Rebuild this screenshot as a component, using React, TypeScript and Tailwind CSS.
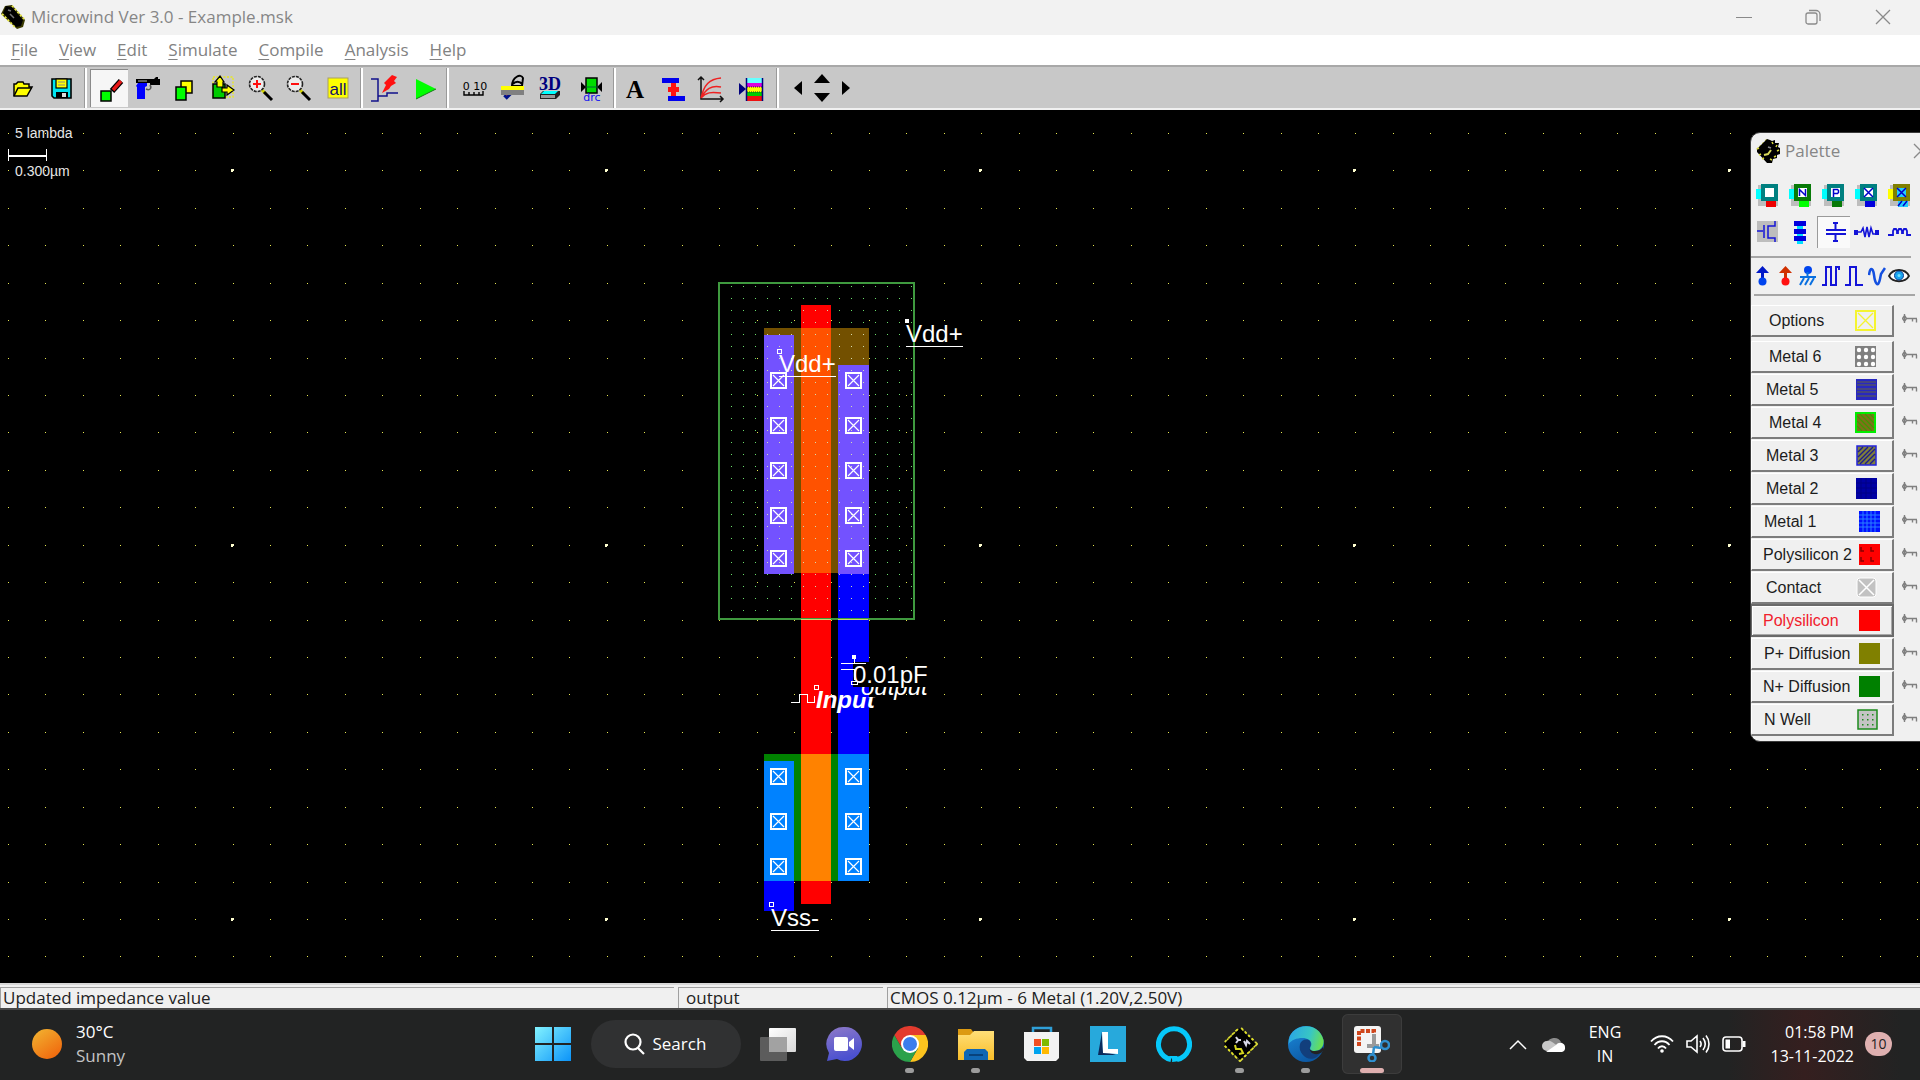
import React from "react";
import type { ReactNode } from "react";

const UI = "font-['Open_Sans','Noto_Sans',sans-serif]";

function Pix({ children }: { children: ReactNode }) {
  return (
    <svg width="38" height="38" viewBox="0 0 38 38" aria-hidden="true" className="block">
      {children}
    </svg>
  );
}

function Tool({ label, active = false, children }: { label: string; active?: boolean; children: ReactNode }) {
  return (
    <button
      type="button"
      aria-label={label}
      className={
        active
          ? "h-[38px] w-[38px] bg-[#f6f6f6] shadow-[inset_1px_1px_0_#8a8a8a]"
          : "h-[38px] w-[38px]"
      }
    >
      <Pix>{children}</Pix>
    </button>
  );
}

function Divider({ className }: { className: string }) {
  return <div className={`h-10 w-[3px] border-l border-r-2 border-l-[#9a9a9a] border-r-white ${className}`} />;
}

function ChipIcon({ className }: { className: string }) {
  return (
    <svg viewBox="0 0 24 24" className={className} aria-hidden="true">
      <path d="M4 1 L11 0 L24 15 L22 22 L16 24 L0 9 Z" fill="#3a3a00" />
      <path d="M11 1l12 13M1 9l14 14" stroke="#e6e64a" strokeWidth="2" strokeDasharray="2 2" />
      <path d="M5 1 L11 2 L22 15 L20 21 L15 22 L2 8 Z" fill="#000" />
      <path d="M7 5l3 1M9 9l4 4" stroke="#777" strokeWidth="1.5" />
    </svg>
  );
}

function PaletteChip() {
  return (
    <svg viewBox="0 0 24 24" className="h-6 w-6" aria-hidden="true">
      <path d="M11 1L2 10L11 22" fill="none" stroke="#c8c83c" strokeWidth="2.500" strokeDasharray="2 2" />
      <path d="M11 0l3 1 2 1 3-1v3h4l-1 4 2 1v6l-3 1v3l-4 1-1 4h-5L1 13v-3z" fill="#000" />
      <path d="M16 3l1 2M21 6l-1 2M23 11l-2 1M20 17l-2 1M16 21l-2-1M5 15l-2 1M8 19l-2 1M3 9l-2 1" stroke="#d8d83c" strokeWidth="1.500" />
      <path d="M8 16l4-1 3-4" fill="none" stroke="#d8d85a" strokeWidth="2" />
      <path d="M12 8l3 1" stroke="#888" strokeWidth="1.500" />
    </svg>
  );
}

function MicrowindLogo() {
  return (
    <svg viewBox="0 0 36 36" className="h-9 w-9 shrink-0" aria-hidden="true">
      <path d="M18 3L33 18L18 33L3 18Z" fill="none" stroke="#d8d83a" strokeWidth="5" strokeDasharray="2.500 2.500" />
      <path d="M18 2L34 18L18 34L2 18Z" fill="#000" />
      <path d="M16 3L3 16M20 3l13 13M3 20l13 13M33 20L20 33" stroke="#e0e020" strokeWidth="1.500" strokeDasharray="2 2.500" />
      <g fill="none" strokeWidth="2">
        <path d="M17 13l-3 4M14 11l2 3 3 0M22 15l2 4 1-4 3 3" stroke="#d8d8e8" />
        <path d="M13 19l1 4h5l2 4-4 1" stroke="#d6d620" />
      </g>
    </svg>
  );
}

function TitleBar() {
  return (
    <header className="flex h-[35px] shrink-0 items-center bg-[#f2f2f2] pb-0.5 pl-px text-[#868686]">
      <ChipIcon className="h-6 w-6" />
      <h1 className="ml-1.5 text-[17px] leading-6">Microwind Ver 3.0 - Example.msk</h1>
      <div className="ml-auto flex pr-px">
        <button type="button" aria-label="Minimize" className="grid h-8 w-[70px] place-items-center">
          <svg width="16" height="16" stroke="#8a8a8a"><path d="M0 8.5h16" /></svg>
        </button>
        <button type="button" aria-label="Restore" className="grid h-8 w-[68px] place-items-center">
          <svg width="16" height="16" fill="none" stroke="#8a8a8a" strokeWidth="1.3">
            <rect x="1" y="4" width="11" height="11" rx="2" />
            <path d="M4 1.5h7a4 4 0 0 1 4 4V12" />
          </svg>
        </button>
        <button type="button" aria-label="Close" className="grid h-8 w-[72px] place-items-center">
          <svg width="16" height="16" stroke="#8a8a8a" strokeWidth="1.3"><path d="M1 1l14 14M15 1L1 15" /></svg>
        </button>
      </div>
    </header>
  );
}

function MenuBar() {
  const items = ["File", "View", "Edit", "Simulate", "Compile", "Analysis", "Help"];
  return (
    <nav className="flex h-[30px] shrink-0 items-center gap-[21px] bg-white pl-[11px] text-[17px] leading-6 text-[#828282]">
      {items.map((item) => (
        <button key={item} type="button">
          <span className="underline underline-offset-[3px]">{item[0]}</span>
          {item.slice(1)}
        </button>
      ))}
    </nav>
  );
}

function Lens({ plus }: { plus: boolean }) {
  return (
    <>
      <path d="M20 21l4 4" stroke="#d8d800" strokeWidth="3" />
      <path d="M22 23l8 8" stroke="#000" strokeWidth="3" />
      <circle cx="15" cy="15" r="7.5" fill="#ececec" stroke="#222" strokeWidth="1.6" strokeDasharray="3 1" />
      <path d={plus ? "M11 15h8M15 11v8" : "M11 15h8"} stroke="#ff1010" strokeWidth="2" />
    </>
  );
}

function Toolbar() {
  return (
    <div className="flex h-[45px] shrink-0 items-center border-b-2 border-t-2 border-b-[#f0f0f0] border-t-[#a8a8a8] bg-[#c8c8c8] pl-1">
      <Tool label="Open">
        <path d="M10 27V15h2l2-2h5l1 2h5v3h3l-5 9z" fill="#ff0" stroke="#000" strokeWidth="1.5" />
        <path d="M10 27l4-8h14" fill="none" stroke="#000" strokeWidth="1.5" />
      </Tool>
      <Tool label="Save">
        <path d="M10 10h19v19H12l-2-2z" fill="#00e5f0" stroke="#000" strokeWidth="1.6" />
        <rect x="14" y="10" width="11" height="9" fill="#ff0" stroke="#000" strokeWidth="1.2" />
        <path d="M16 13h7M16 16h7" stroke="#888" />
        <rect x="14" y="23" width="12" height="6" fill="#000" />
        <rect x="20" y="24" width="4" height="4" fill="#ddd" />
      </Tool>
      <Divider className="ml-1 mr-[3px]" />
      <Tool label="Draw box" active>
        <rect x="11" y="22" width="10" height="10" fill="#0f0" stroke="#000" strokeWidth="1.5" />
        <path d="M22 22l9-10" stroke="#000" strokeWidth="6" />
        <path d="M23 21l8-9" stroke="#e81818" strokeWidth="3.5" />
      </Tool>
      <Tool label="Delete">
        <path d="M8 10h18l2-2h2v2h2v6H22v-2H8z" fill="#000" />
        <path d="M10 14h9v3l-2 1v12h-8V18l-1-1z" fill="#00f" />
        <path d="M10 12h9" stroke="#bbb" />
        <path d="M18 20c4 2 6-1 4-4" fill="none" stroke="#555" strokeWidth="1.5" />
      </Tool>
      <Tool label="Copy">
        <rect x="15" y="12" width="11" height="12" fill="#ff0" stroke="#000" strokeWidth="1.5" />
        <rect x="10" y="18" width="10" height="13" fill="#0f0" stroke="#000" strokeWidth="1.5" />
      </Tool>
      <Tool label="Move">
        <rect x="9" y="8" width="20" height="20" fill="none" stroke="#e8e820" strokeWidth="1.4" strokeDasharray="2 1.5" />
        <rect x="9" y="15" width="12" height="14" fill="#0c0" stroke="#000" strokeWidth="1.5" />
        <path d="M13 18v-5h-2l5-6 4 6h-1v5zM18 19h5v-3l7 5-7 5v-3h-5z" fill="#ff0" stroke="#000" strokeWidth="1.2" />
      </Tool>
      <Tool label="Zoom in"><Lens plus /></Tool>
      <Tool label="Zoom out"><Lens plus={false} /></Tool>
      <Tool label="View all">
        <rect x="10" y="9" width="20" height="20" fill="#ff0" stroke="#a9a060" />
        <text x="20" y="26" textAnchor="middle" fontFamily="Liberation Sans, sans-serif" fontSize="17" fill="#10106a">all</text>
      </Tool>
      <Divider className="mx-1" />
      <Tool label="Simulate">
        <path d="M4 10h7v22H4M11 27h9v-3h11" fill="none" stroke="#10108a" strokeWidth="1.5" />
        <path d="M25 6l5 2-3 4 2 2-5 3-2 3-7 4 4-8-2-2z" fill="#f11" />
      </Tool>
      <Tool label="Run">
        <path d="M11 10v20l20-10z" fill="#0f0" />
        <path d="M11 30l20-10" stroke="#197a19" />
      </Tool>
      <Divider className="ml-[3px] mr-1.5" />
      <Tool label="Measure">
        <text x="20" y="21" textAnchor="middle" fontFamily="DejaVu Sans, sans-serif" fontSize="11" fill="#000">0 10</text>
        <path d="M9 22v4h19v-4M14 26v-3M19 26v-3M24 26v-3" fill="none" stroke="#000" strokeWidth="1.4" />
      </Tool>
      <Tool label="Cut view">
        <path d="M19 17c0-9 9-13 11-8l-1 8zM20 15c2-3 7-3 9 0" fill="none" stroke="#000" strokeWidth="2" />
        <path d="M12 29l9-9" stroke="#00128a" strokeWidth="5" />
        <path d="M13 26l5-4" stroke="#e22" strokeWidth="2" />
        <path d="M8 17h23v4H8z" fill="#ff0" />
        <path d="M8 21h23v5H8z" fill="#808080" />
      </Tool>
      <Tool label="3D view">
        <text x="19" y="21" textAnchor="middle" fontFamily="Liberation Serif, serif" fontWeight="700" fontSize="18" fill="#00007e">3D</text>
        <path d="M9 25l3-3h17v4l-4 4H9z" fill="#222" />
        <path d="M10 25l3-3h14l-3 3z" fill="#0ff" />
        <rect x="10" y="26" width="14" height="3" fill="#999" />
      </Tool>
      <Tool label="Design rule check">
        <rect x="17" y="9" width="11" height="15" fill="#0d0" stroke="#000" strokeWidth="1.5" />
        <path d="M12 13l5 5-5 5zM33 13l-5 5 5 5z" fill="#000" />
        <path d="M17 18h12" stroke="#063" />
        <text x="23" y="32" textAnchor="middle" fontFamily="DejaVu Sans, sans-serif" fontSize="11" fill="#11e">drc</text>
      </Tool>
      <Divider className="ml-1.5" />
      <Tool label="Text">
        <text x="19" y="29" textAnchor="middle" fontFamily="Liberation Serif, serif" fontWeight="700" fontSize="25" fill="#000">A</text>
      </Tool>
      <Tool label="Connect">
        <path d="M8 9h17v5H8zM14 27h17v5H14z" fill="#00e" />
        <path d="M17 14h5v13h-5zM14 18h11v5H14z" fill="#f11" />
      </Tool>
      <Tool label="MOS characteristics">
        <path d="M9 8v22h22M6 11l3-3 3 3M28 27l3 3-3 3" fill="none" stroke="#111" strokeWidth="1.5" />
        <path d="M9 29c3-13 8-19 20-20M9 29c5-9 10-13 20-11M9 29c5-6 10-6 20-5" fill="none" stroke="#e22" strokeWidth="1.5" />
      </Tool>
      <Tool label="Process section">
        <path d="M9 14l7 6-7 6z" fill="#00007e" />
        <rect x="16" y="9" width="17" height="5" fill="#6ff" />
        <rect x="16" y="14" width="17" height="4" fill="#d0d" />
        <rect x="16" y="18" width="17" height="5" fill="#ff0" />
        <rect x="16" y="23" width="17" height="4" fill="#0c0" />
        <rect x="16" y="27" width="17" height="5" fill="#e11" />
        <path d="M17 18h16M17 23h16" stroke="#333" strokeDasharray="1 1" />
        <path d="M16.500 9v23M32.500 9v23" stroke="#00007e" strokeWidth="1.5" />
      </Tool>
      <Divider className="ml-2 mr-[11px]" />
      <button type="button" aria-label="Pan left" className="flex h-[38px] w-4 items-center justify-center">
        <svg width="8" height="14"><path d="M8 0v14L0 7z" /></svg>
      </button>
      <div className="ml-1 flex w-6 flex-col items-center gap-2.5">
        <button type="button" aria-label="Pan up">
          <svg width="16" height="9" className="block"><path d="M0 9h16L8 0z" /></svg>
        </button>
        <button type="button" aria-label="Pan down">
          <svg width="16" height="9" className="block"><path d="M0 0h16L8 9z" /></svg>
        </button>
      </div>
      <button type="button" aria-label="Pan right" className="ml-1 flex h-[38px] w-4 items-center justify-center">
        <svg width="8" height="14"><path d="M0 0v14l8-7z" /></svg>
      </button>
    </div>
  );
}

const PITCH = 37.43;

function Grid() {
  const dots: ReactNode[] = [];
  for (let c = 0; c < 52; c++) {
    for (let r = 0; r < 24; r++) {
      dots.push(
        <rect key={`${c}-${r}`} x={Math.round(8 + PITCH * c)} y={Math.round(23 + PITCH * r)} width="1" height="1" fill="#e6e650" />,
      );
    }
  }
  for (const x of [231, 605, 979, 1353, 1728]) {
    for (const y of [59, 434, 808]) {
      dots.push(<path key={`m${x}-${y}`} d={`M${x} ${y}h3v2h-1v1h-2z`} fill="#ffffd0" />);
    }
  }
  return <>{dots}</>;
}

function WellDots() {
  const dots: ReactNode[] = [];
  for (let c = 0; c < 16; c++) {
    for (let r = 0; r < 28; r++) {
      const x = 731 + 12 * c;
      const y = 176 + 12 * r;
      const covered =
        (x >= 801 && x < 831 && y > 195) ||
        (x >= 764 && x < 868 && y > 218 && y < 463) ||
        (x >= 838 && x < 868 && y > 255);
      dots.push(<rect key={`${c}-${r}`} x={x} y={y} width="1" height="1" fill={covered ? "#d4dcb0" : "#6ade6a"} />);
    }
  }
  return <>{dots}</>;
}

function Contact({ x, y }: { x: number; y: number }) {
  return (
    <g stroke="#fff" fill="none">
      <rect x={x + 1} y={y + 1} width="15" height="15" strokeWidth="1.5" />
      <path d={`M${x + 3} ${y + 3}l11 11M${x + 14} ${y + 3}l-11 11`} strokeWidth="1.2" shapeRendering="auto" />
    </g>
  );
}

function Layout() {
  return (
    <svg className="block h-full w-full" role="img" aria-label="Inverter layout" shapeRendering="crispEdges">
      <Grid />
      <rect x="801" y="195" width="30" height="599" fill="#f00" />
      <rect x="838" y="463" width="31" height="181" fill="#00f" />
      <rect x="764" y="771" width="30" height="30" fill="#00f" />
      <rect x="764" y="218" width="105" height="245" fill="#735000" />
      <rect x="801" y="218" width="30" height="245" fill="#ff5200" />
      <rect x="764" y="225" width="30" height="239" fill="#7352ff" />
      <rect x="838" y="255" width="31" height="209" fill="#7352ff" />
      <rect x="764" y="644" width="105" height="127" fill="#008200" />
      <rect x="801" y="644" width="30" height="127" fill="#ff8200" />
      <rect x="764" y="651" width="30" height="120" fill="#0082ff" />
      <rect x="838" y="644" width="31" height="127" fill="#0082ff" />
      <rect x="719" y="173" width="195" height="336" fill="none" stroke="#3f9a3f" strokeWidth="1.500" />
      <path d="M801 509h30M838 509h30" stroke="#d0d870" />
      <WellDots />
      {[262, 307, 352, 397, 440, 658, 703, 748].map((y) => (
        <g key={y}>
          <Contact x={770} y={y} />
          <Contact x={845} y={y} />
        </g>
      ))}
      <g fill="none" stroke="#fff">
        <path d="M791 592h8v-8h8v8h7v-6M814 575h4v4h-4z" />
        <rect x="777" y="239" width="4" height="4" />
        <rect x="769" y="792" width="4" height="4" />
      </g>
      <rect x="905" y="209" width="4" height="4" fill="#fff" />
      <g fontFamily="Liberation Sans, sans-serif" fontSize="24" fill="#fff">
        <text x="906" y="232">Vdd+</text>
        <text x="779" y="262">Vdd+</text>
        <text x="771" y="816">Vss-</text>
        <text x="816" y="598" fontWeight="700" fontStyle="italic">Input</text>
        <rect x="861" y="577" width="8" height="10" fill="#00f" />
        <rect x="869" y="577" width="14" height="10" fill="#000" />
        <text x="861" y="585" fontStyle="italic">output</text>
        <rect x="853" y="552" width="78" height="25" fill="#000" />
        <text x="853" y="573">0.01pF</text>
      </g>
      <g fill="#fff">
        <rect x="906" y="236" width="57" height="1" />
        <rect x="779" y="266" width="57" height="1" />
        <rect x="771" y="820" width="48" height="1" />
        <rect x="852" y="545" width="4" height="4" />
        <rect x="854" y="548" width="1" height="5" />
        <rect x="841" y="553" width="25" height="1" />
        <rect x="841" y="559" width="14" height="1" />
        <rect x="854" y="559" width="2" height="11" />
      </g>
      <rect x="851" y="571" width="6" height="3" fill="none" stroke="#fff" />
      <path d="M8 46h38" stroke="#fff" strokeWidth="2" />
      <path d="M8 39v12M46 39v12" stroke="#fff" />
      <g fontFamily="Liberation Sans, sans-serif" fontSize="14" fill="#e6e6e6">
        <text x="15" y="28">5 lambda</text>
        <text x="15" y="66">0.300µm</text>
      </g>
    </svg>
  );
}

function ContactTool({ label, main, side, foot, inner, mark }: { label: string; main: string; side: string; foot: string; inner: string; mark: ReactNode }) {
  return (
    <button type="button" aria-label={label} className="w-[33px]">
      <svg width="24" height="24" viewBox="0 0 24 24" className="block">
        <rect x="2" y="1" width="20" height="21" fill="#bdbdbd" />
        <rect x="0" y="5" width="6" height="10" fill={side} />
        <rect x="10" y="17" width="10" height="6" fill={foot} />
        <rect x="5" y="0" width="17" height="17" fill={main} />
        <rect x="9" y="4" width="9" height="9" fill={inner} />
        {mark}
      </svg>
    </button>
  );
}

function LineTool({ label, width, children, active = false }: { label: string; width: string; children: ReactNode; active?: boolean }) {
  return (
    <button
      type="button"
      aria-label={label}
      className={`flex h-8 items-center ${width} ${active ? "bg-[#fafafa] shadow-[inset_1px_1px_0_#9a9a9a]" : ""}`}
    >
      {children}
    </button>
  );
}

const SWATCHES: Record<string, ReactNode> = {
  options: (
    <g fill="none" stroke="#f4f430" strokeWidth="2">
      <rect x="1" y="1" width="19" height="19" />
      <path d="M3 3l15 15M18 3L3 18" strokeWidth="1.3" />
    </g>
  ),
  m6: (
    <g>
      <rect width="21" height="21" fill="#808080" />
      {[4, 11, 18].map((x) => [4, 11, 18].map((y) => <circle key={`${x}-${y}`} cx={x} cy={y} r="2.2" fill="#fff" />))}
    </g>
  ),
  m5: (
    <g>
      <rect width="21" height="21" fill="#2828c0" />
      <path d="M1 3h19M1 6h19M1 10h19M1 13h19M1 17h19" stroke="#50506a" strokeWidth="1.5" />
    </g>
  ),
  m4: (
    <g>
      <rect x="1" y="1" width="19" height="19" fill="#80701a" stroke="#0e0" strokeWidth="2" />
      <path d="M2 14l5 5M2 9l10 10M2 4l15 15M5 2l14 14M10 2l9 9M15 2l4 4" stroke="#3f9800" strokeWidth="1.300" />
    </g>
  ),
  m3: (
    <g>
      <rect x="1" y="1" width="19" height="19" fill="#80803a" stroke="#22d" strokeWidth="1.500" />
      <path d="M2 7l5-5M2 12L12 2M2 17L17 2M4 19L19 4M9 19L19 9M14 19l5-5" stroke="#1c1c8c" strokeWidth="1.400" />
    </g>
  ),
  m2: (
    <g>
      <rect width="21" height="21" fill="#0000a4" />
      <path d="M0 5h21M0 10h21M0 15h21M5 0v21M10 0v21M15 0v21" stroke="#000084" />
    </g>
  ),
  m1: (
    <g>
      <rect width="21" height="21" fill="#0010ff" />
      <path d="M0 4h21M0 8h21M0 12h21M0 16h21M4 0v21M8 0v21M12 0v21M16 0v21" stroke="#2a80ff" />
    </g>
  ),
  poly2: (
    <g>
      <rect width="21" height="21" fill="#f00" />
      <path d="M2 3v4h3M12 3v4h3M2 13v4h3M12 13v4h3" fill="none" stroke="#800" strokeWidth="1.500" />
    </g>
  ),
  contact: (
    <g>
      <rect x="1" y="1" width="19" height="19" rx="3" fill="#c2c2c2" stroke="#fff" />
      <path d="M3 3l15 15M18 3L3 18" stroke="#fff" strokeWidth="1.500" />
    </g>
  ),
  poly: <rect width="21" height="21" fill="#f00" />,
  pdiff: <rect width="21" height="21" fill="#808000" />,
  ndiff: <rect width="21" height="21" fill="#008000" />,
  nwell: (
    <g>
      <rect x="1" y="1" width="19" height="19" fill="#c4c4c4" stroke="#1c8a1c" strokeWidth="1.500" />
      {[5, 10, 15].map((x) => [5, 10, 15].map((y) => <rect key={`${x}-${y}`} x={x} y={y} width="1.500" height="1.500" fill="#1c8a1c" />))}
    </g>
  ),
};

const LAYERS = [
  { id: "options", label: "Options", pad: "pl-[17px] pr-4" },
  { id: "m6", label: "Metal 6", pad: "pl-[17px] pr-4" },
  { id: "m5", label: "Metal 5", pad: "pl-3.5 pr-[15px]" },
  { id: "m4", label: "Metal 4", pad: "pl-[17px] pr-4" },
  { id: "m3", label: "Metal 3", pad: "pl-3.5 pr-[15px]" },
  { id: "m2", label: "Metal 2", pad: "pl-3.5 pr-[15px]" },
  { id: "m1", label: "Metal 1", pad: "pl-3 pr-3" },
  { id: "poly2", label: "Polysilicon 2", pad: "pl-[11px] pr-3" },
  { id: "contact", label: "Contact", pad: "pl-3.5 pr-[15px]" },
  { id: "poly", label: "Polysilicon", pad: "pl-[11px] pr-3" },
  { id: "pdiff", label: "P+ Diffusion", pad: "pl-3 pr-3" },
  { id: "ndiff", label: "N+ Diffusion", pad: "pl-[11px] pr-3" },
  { id: "nwell", label: "N Well", pad: "pl-3 pr-3.5" },
];

function LayerRow({ id, label, pad }: { id: string; label: string; pad: string }) {
  const selected = id === "poly";
  return (
    <li className={id === "options" ? "mb-1 flex h-[33px] pt-px" : "flex h-[33px]"}>
      <button
        type="button"
        className={`flex h-8 w-[143px] items-center justify-between whitespace-nowrap border-b-2 border-l border-r-2 border-t text-base leading-5 ${pad} ${
          selected
            ? "border-[#6a6a6a] text-[#f0202c] shadow-[inset_1px_1px_0_#fff,inset_-1px_-1px_0_#a8a8a8,0_-1px_0_#6a6a6a]"
            : "border-b-[#7c7c7c] border-l-white border-r-[#7c7c7c] border-t-white text-[#1c1c1c]"
        }`}
      >
        {label}
        <svg width="21" height="21" viewBox="0 0 21 21" aria-hidden="true">{SWATCHES[id]}</svg>
      </button>
      <button type="button" aria-label={`Protect ${label}`} className="ml-2 mt-2 h-3 w-4">
        <svg width="16" height="10" viewBox="0 0 16 10" fill="none" stroke="#808080" className="block">
          <path d="M2.500 1.500l2 3-2 3-2-3zM2.500 0v9M5 4.500h10M10.500 5v2.500M14.500 5v3.500" strokeWidth="1.400" />
        </svg>
      </button>
    </li>
  );
}

function Palette() {
  return (
    <section
      aria-label="Palette"
      className="absolute -right-3 top-[22px] w-[182px] overflow-hidden rounded-l-[10px] border border-[#3a3a3a] bg-[#f0f0f0] pb-1 font-['Liberation_Sans',sans-serif]"
    >
      <div className={`flex h-9 items-center pl-[5px] text-[#868686] ${UI}`}>
        <PaletteChip />
        <h2 className="ml-[5px] text-[17px] leading-6">Palette</h2>
        <button type="button" aria-label="Close palette" className="ml-auto mr-0.5">
          <svg width="16" height="16" stroke="#8a8a8a" strokeWidth="1.3" className="block"><path d="M1 1l14 14M15 1L1 15" /></svg>
        </button>
      </div>
      <div className="flex pl-[5px] pt-[15px]">
        <ContactTool label="Poly contact" main="#008080" side="#0ff" foot="#e00" inner="#fff" mark={null} />
        <ContactTool label="N+ contact" main="#087a08" side="#0ff" foot="#0f0" inner="#fff" mark={<path d="M10.500 12V5.500l6 6V5" fill="none" stroke="#00c" strokeWidth="1.500" />} />
        <ContactTool label="P+ contact" main="#008080" side="#0ff" foot="#087a08" inner="#fff" mark={<path d="M11.500 13V5.500h4l1 1v2l-1 1h-4" fill="none" stroke="#00c" strokeWidth="1.500" />} />
        <ContactTool label="Via" main="#008080" side="#0ff" foot="#00d" inner="#fff" mark={<path d="M9 4l9 9M18 4l-9 9" stroke="#00c" strokeWidth="1.500" />} />
        <ContactTool label="Stacked via" main="#808000" side="#ff0" foot="#2cf" inner="#2cf" mark={<path d="M9 4l9 9M18 4l-9 9M10 22l4-5M15 22l4-5" stroke="#00c" strokeWidth="1.500" />} />
      </div>
      <div className="mt-2 flex pl-1.5">
        <LineTool label="MOS generator" width="w-9">
          <svg width="22" height="22" viewBox="0 0 22 22"><rect width="21" height="21" fill="#bdbdbd" /><path d="M0 10h6M7 4v13M18 0v5h-7v12h7v4" fill="none" stroke="#1414d8" strokeWidth="1.500" /></svg>
        </LineTool>
        <LineTool label="Wire path" width="w-6">
          <svg width="15" height="23" viewBox="0 0 15 23"><rect x="4" width="6" height="23" fill="#0df" /><path d="M1 0h12v5H1zM1 8h12v5H1zM1 15h12v5H1z" fill="#00d" /></svg>
        </LineTool>
        <LineTool label="Capacitor" width="w-[33px] pl-2" active>
          <svg width="22" height="22" viewBox="0 0 22 22"><path d="M10.500 1v8M1 9h20M1 13h20M10.500 13v8M8 2h5M8 20h5" stroke="#1414d8" strokeWidth="2" /></svg>
        </LineTool>
        <LineTool label="Resistor" width="w-[38px] pl-1">
          <svg width="26" height="14" viewBox="0 0 26 14"><path d="M0 5h4v5H0zM21 5h4v5h-4z" fill="#1414d8" /><path d="M3 7h4l2-4 2 9 2-10 2 10 2-9 2 6h4" fill="none" stroke="#1414d8" strokeWidth="1.600" /></svg>
        </LineTool>
        <LineTool label="Inductor" width="w-6">
          <svg width="24" height="11" viewBox="0 0 24 11"><path d="M0 8h5V4l1-2h2l1 2v3M10 7V4l1-2h2l1 2v3M15 7V4l1-2h2l1 2v4h4" fill="none" stroke="#1414d8" strokeWidth="1.800" /></svg>
        </LineTool>
      </div>
      <hr className="mr-5 mt-2 border-t-2 border-[#a6a6a6]" />
      <div className="flex h-9 items-center gap-1 pl-[5px]">
        <button type="button" aria-label="Vdd supply"><svg width="13" height="20" viewBox="0 0 13 20" className="block"><path d="M6.500 0L13 7H8v6H5V7H0z" fill="#0018c8" /><circle cx="6.500" cy="15.500" r="4" fill="#04e" /></svg></button>
        <button type="button" aria-label="Vdd high" className="ml-1.5"><svg width="13" height="20" viewBox="0 0 13 20" className="block"><path d="M6.500 0L13 7H8v6H5V7H0z" fill="#d03000" /><circle cx="6.500" cy="15.500" r="4" fill="#f11" /></svg></button>
        <button type="button" aria-label="Ground" className="ml-[3px]"><svg width="17" height="20" viewBox="0 0 17 20" className="block"><circle cx="9" cy="4" r="4" fill="#04e" /><path d="M8.500 6v5M1 11h16M5 12l-4 7M10 12l-4 7M15 12l-4 7" stroke="#0a70e0" strokeWidth="2" /></svg></button>
        <button type="button" aria-label="Clock" className="ml-0.5"><svg width="19" height="20" viewBox="0 0 19 20" className="block"><path d="M0 19h4V1h5v18h5V1h4M17 1v3" fill="none" stroke="#1414d8" strokeWidth="2" /></svg></button>
        <button type="button" aria-label="Pulse"><svg width="19" height="20" viewBox="0 0 19 20" className="block"><path d="M0 19h5V1h6v18h7" fill="none" stroke="#1414d8" strokeWidth="2" /></svg></button>
        <button type="button" aria-label="Sine wave"><svg width="18" height="20" viewBox="0 0 18 20" className="block"><path d="M1 9c1-8 4-8 5 0s4 14 6 4l1-5 4-6" fill="none" stroke="#1450e0" strokeWidth="2.500" /></svg></button>
        <button type="button" aria-label="Visible node" className="-ml-0.5"><svg width="22" height="14" viewBox="0 0 22 14" className="block"><path d="M1 7c4-8 16-8 20 0-4 7-16 7-20 0z" fill="#fff" stroke="#222" strokeWidth="1.800" /><circle cx="11" cy="6.500" r="4.500" fill="#19a4f0" stroke="#0a3a90" /><circle cx="11" cy="6.500" r="1.500" fill="#6fe0ff" /></svg></button>
      </div>
      <hr className="ml-[3px] mr-4 border-t-2 border-[#a6a6a6]" />
      <ul className="mt-2">
        {LAYERS.map((l) => (
          <LayerRow key={l.id} {...l} />
        ))}
      </ul>
    </section>
  );
}

function StatusBar() {
  return (
    <footer className="flex h-[25px] shrink-0 gap-1 border-t-2 border-t-[#d8d8d8] bg-[#f0f0f0] pt-0.5 text-[17px] leading-5 text-[#222]">
      <p className="w-[674px] border-l border-t border-[#a0a0a0] pl-0.5">Updated impedance value</p>
      <p className="w-[205px] border-l border-t border-[#a0a0a0] pl-[7px]">output</p>
      <p className="flex-1 border-l border-t border-[#a0a0a0] pl-0.5">CMOS 0.12µm - 6 Metal (1.20V,2.50V)</p>
    </footer>
  );
}

function App36({ label, dot = false, active = false, children }: { label: string; dot?: boolean; active?: boolean; children: ReactNode }) {
  return (
    <button
      type="button"
      aria-label={label}
      className={`mx-[3px] flex h-[60px] w-[60px] flex-col items-center rounded-md pt-3 ${active ? "bg-[#303030] ring-1 ring-inset ring-[#3c3c3c]" : ""}`}
    >
      <svg width="36" height="36" viewBox="0 0 36 36" aria-hidden="true" className="shrink-0">{children}</svg>
      {dot && <span className="mt-1.5 h-[5px] w-[9px] rounded-full bg-[#9c9c9c]" />}
      {active && <span className="mt-1.5 h-[5px] w-6 rounded-full bg-[#dfb0b0]" />}
    </button>
  );
}

function Taskbar() {
  return (
    <div className="flex h-[72px] shrink-0 items-center border-t-2 border-[#484848] bg-[#222323] bg-[linear-gradient(90deg,transparent_90%,#351f1f_94%,transparent_99%)] pb-0.5 text-white">
      <div className="flex flex-1 items-center pl-8">
        <svg width="30" height="30" aria-hidden="true">
          <defs><linearGradient id="sun" x1="0" y1="0" x2="0.7" y2="1"><stop stopColor="#f2b632" /><stop offset="1" stopColor="#f0690e" /></linearGradient></defs>
          <circle cx="15" cy="15" r="15" fill="url(#sun)" />
        </svg>
        <div className="ml-3.5 text-[17px] leading-6">
          <p>30°C</p>
          <p className="text-[#c4c4c4]">Sunny</p>
        </div>
      </div>
      <div className="flex items-center">
        <button type="button" aria-label="Start" className="grid h-[60px] w-[66px] place-items-center">
          <svg width="36" height="36" aria-hidden="true">
            <defs><linearGradient id="win" gradientUnits="userSpaceOnUse" x1="0" y1="0" x2="36" y2="36"><stop stopColor="#84f4ff" /><stop offset="1" stopColor="#0a92f8" /></linearGradient></defs>
            <path d="M0 1h17v16H0zM19 1h17v16H19zM0 19h17v16H0zM19 19h17v16H19z" fill="url(#win)" />
          </svg>
        </button>
        <button type="button" className="ml-[5px] mr-1 flex h-12 w-[150px] items-center rounded-full bg-[#303132] pl-8 text-[17px] leading-6">
          <svg width="22" height="22" fill="none" stroke="#fff" strokeWidth="2.200" aria-hidden="true"><circle cx="10" cy="9" r="7.500" /><path d="M15 15l6 6" /></svg>
          <span className="ml-2">Search</span>
        </button>
        <App36 label="Task view">
          <defs><linearGradient id="tv" x1="0" y1="0" x2="1" y2="1"><stop stopColor="#fff" /><stop offset="1" stopColor="#d8d8d8" /></linearGradient></defs>
          <rect x="9" y="2" width="27" height="24" rx="1" fill="url(#tv)" />
          <rect x="0" y="11" width="27" height="24" rx="1" fill="#5c5c5c" />
          <path d="M9 11h18v15H9z" fill="#a2a2a2" />
        </App36>
        <App36 label="Chat">
          <defs><linearGradient id="chat" x1="0" y1="0" x2="0.300" y2="1"><stop stopColor="#8f7ac8" /><stop offset="1" stopColor="#4a50d0" /></linearGradient></defs>
          <path d="M18 1a17 17 0 1 1-7 32L1 35l2-8A17 17 0 0 1 18 1z" fill="url(#chat)" />
          <rect x="8" y="11" width="14" height="14" rx="2" fill="#fff" />
          <path d="M23 16l5-4v12l-5-4z" fill="#fff" />
        </App36>
        <App36 label="Chrome" dot>
          <path d="M18 18V9h15.600A18 18 0 0 1 18 36l7.800-13.500z" fill="#fcc31e" />
          <path d="M18 18l7.800 4.500L18 36A18 18 0 0 1 2.400 9l7.800 13.500z" fill="#2ba14b" />
          <path d="M2.400 9A18 18 0 0 1 33.600 9H18l-8 13z" fill="#e33b2e" />
          <circle cx="18" cy="18" r="9" fill="#fff" />
          <circle cx="18" cy="18" r="7" fill="#3b7ded" />
        </App36>
        <App36 label="File Explorer" dot>
          <defs><linearGradient id="fold" x1="0" y1="0" x2="0" y2="1"><stop stopColor="#ffdf78" /><stop offset="1" stopColor="#f9bd28" /></linearGradient></defs>
          <path d="M0 3h13l3 4v5H0z" fill="#dc9a12" />
          <path d="M0 9h12l4-4h20v29H0z" fill="url(#fold)" />
          <path d="M6 34V26l3-3h18l3 3v8z" fill="#1067b4" />
          <path d="M11 29h14" stroke="#08427c" strokeWidth="2" />
        </App36>
        <App36 label="Microsoft Store">
          <path d="M9 7V2h18v5" fill="none" stroke="#2f9fd8" strokeWidth="2.500" />
          <path d="M0 6h35v26l-3 3H3l-3-3z" fill="#f2f2f2" />
          <path d="M10 13h7v7h-7z" fill="#f25022" /><path d="M18 13h7v7h-7z" fill="#7fba00" />
          <path d="M10 21h7v7h-7z" fill="#00a4ef" /><path d="M18 21h7v7h-7z" fill="#ffb900" />
        </App36>
        <App36 label="Lenovo Vantage">
          <rect width="36" height="36" fill="#27a9dc" />
          <path d="M12 6L8 29h18l-13-4z" fill="#0b2a5c" />
          <path d="M12 6h6v17h10v5l-15-1z" fill="#fff" />
        </App36>
        <App36 label="Alexa">
          <path d="M15 33.500A15.500 15.500 0 1 1 21 33.500" fill="none" stroke="#06c8fa" strokeWidth="5" />
          <path d="M12 30c3 1 5 3 4 6 3 0 6-1 8-2l-3-4z" fill="#06c8fa" />
        </App36>
        <button type="button" aria-label="Microwind" className="mx-[3px] flex h-[60px] w-[60px] flex-col items-center pt-3">
          <MicrowindLogo />
          <span className="mt-1.5 h-[5px] w-[9px] rounded-full bg-[#9c9c9c]" />
        </button>
        <App36 label="Edge" dot>
          <defs>
            <linearGradient id="eg" x1="0" y1="0.300" x2="1" y2="0.500"><stop stopColor="#2aa5e4" /><stop offset="0.600" stopColor="#38c6c4" /><stop offset="1" stopColor="#6be04f" /></linearGradient>
            <linearGradient id="eb" x1="0" y1="0" x2="0.500" y2="1"><stop stopColor="#1c8bdc" /><stop offset="1" stopColor="#0c59a4" /></linearGradient>
          </defs>
          <circle cx="18" cy="18" r="18" fill="url(#eb)" />
          <path d="M1 13C4-2 30-6 35.500 14c1 7-4 11-9 11-4 0-5-2-4-4 3-5-2-9-8-9-6 0-11 2-14 6z" fill="url(#eg)" />
          <path d="M12 18c1-4 7-6 10-3 1 2 1 4 0 6-1 3 1 5 5 5h6c-5 9-14 8-18 3-3-3-4-7-3-11z" fill="#123f7c" />
          <path d="M22 20c-1 3 0 5 5 5 3 0 6-1 8-4l1 3-3 3c-6 3-13 0-11-7z" fill="#222323" />
        </App36>
        <App36 label="Snipping Tool" active>
          <rect x="0" y="0" width="27" height="27" rx="3" fill="#f4f4f4" />
          <path d="M5 20V5h15v8" fill="none" stroke="#d0461c" strokeWidth="4" strokeDasharray="4 1.500" />
          <path d="M20 8v13M13 20h12" fill="none" stroke="#9a9a9a" strokeWidth="4" />
          <path d="M20 21l7 1M20 21l-1 8" stroke="#2f90d0" strokeWidth="2.500" />
          <circle cx="31" cy="19" r="4" fill="none" stroke="#2f90d0" strokeWidth="2.500" />
          <circle cx="18" cy="32" r="3.500" fill="none" stroke="#2f90d0" strokeWidth="2.500" />
        </App36>
      </div>
      <div className="flex flex-1 items-center justify-end pr-7 text-base leading-6">
        <button type="button" aria-label="Show hidden icons">
          <svg width="18" height="11" fill="none" stroke="#fff" strokeWidth="1.500" className="block"><path d="M1 10l8-8 8 8" /></svg>
        </button>
        <button type="button" aria-label="OneDrive" className="ml-[15px]">
          <svg width="24" height="16" className="block">
            <path d="M5 8a7.500 7.500 0 0 1 14-2l-5 6z" fill="#8c8c8c" />
            <path d="M5 15a5 5 0 0 1 0-10c3-1 5 1 8 3l8 6z" fill="#c8c8c8" />
            <path d="M4 16l10-7c3-4 9-2 9 2a4.500 4.500 0 0 1-3 5z" fill="#fff" />
          </svg>
        </button>
        <button type="button" className="ml-[21px] w-9 text-center">ENG<br />IN</button>
        <button type="button" aria-label="Network, volume and battery" className="ml-[27px] flex items-center gap-3">
          <svg width="24" height="20" viewBox="0 0 24 20" fill="none" stroke="#fff" strokeWidth="1.800">
            <path d="M1 7.500c6-7 16-7 22 0M4.500 11c4-5 11-5 15 0M8 14.500c2-3 6-3 8 0" /><circle cx="12" cy="17" r="1.800" fill="#fff" stroke="none" />
          </svg>
          <svg width="24" height="20" viewBox="0 0 24 20" fill="none" stroke="#fff" strokeWidth="1.600">
            <path d="M1 7h4l6-5v16l-6-5H1zM14 7c1.500 2 1.500 4 0 6M17 4c3 4 3 8 0 12M20 1.500c4 5 4 12 0 17" />
          </svg>
          <svg width="24" height="16" viewBox="0 0 24 16" fill="none" stroke="#fff" strokeWidth="1.600">
            <rect x="1" y="1" width="19" height="14" rx="3" /><rect x="3.500" y="3.500" width="4.500" height="9" fill="#fff" stroke="none" /><path d="M22 5v6" strokeWidth="3" />
          </svg>
        </button>
        <button type="button" className="ml-5 w-[88px] whitespace-nowrap text-right">01:58 PM<br />13-11-2022</button>
        <button type="button" aria-label="10 notifications" className="ml-[11px] h-6 w-[27px] rounded-full bg-[#dfb0b0] text-center text-sm leading-6 text-[#222]">10</button>
      </div>
    </div>
  );
}

export default function App() {
  return (
    <div className={`flex h-screen flex-col overflow-hidden bg-black ${UI}`}>
      <TitleBar />
      <MenuBar />
      <Toolbar />
      <main className="relative min-h-0 flex-1 overflow-hidden bg-black">
        <Layout />
        <Palette />
      </main>
      <StatusBar />
      <Taskbar />
    </div>
  );
}
